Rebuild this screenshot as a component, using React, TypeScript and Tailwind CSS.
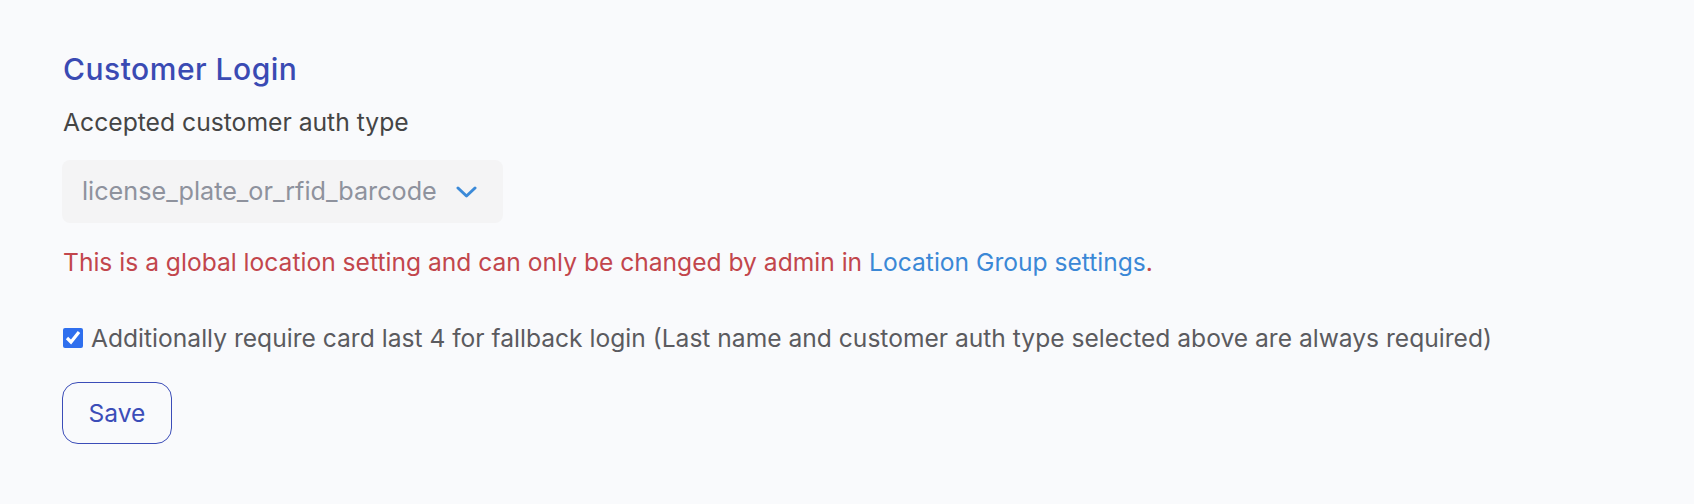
import { useState } from 'react';

export default function App() {
  const [cardLast4, setCardLast4] = useState(true);

  return (
    <div className="min-h-[504px] w-full bg-[#f9fafc] px-[63px] pt-[51px] font-['Inter',sans-serif]">
      <h2 className="text-[30px] font-medium leading-[36px] tracking-[0.5px] text-[#3a4ab3]">Customer Login</h2>

      <label className="mt-[20px] block text-[24.7px] leading-[30px] text-[#454545]">
        Accepted customer auth type
      </label>

      <div className="-ml-px mt-[23px] flex h-[63px] w-[441px] items-center rounded-[8px] bg-[#f4f4f5] pl-[20px] pr-[26px]">
        <span className="text-[25.2px] text-[#8e929d]">license_plate_or_rfid_barcode</span>
        <svg className="ml-auto" width="21" height="12" viewBox="0 0 21 12" fill="none">
          <path d="M2 2l8.5 8 8.5-8" stroke="#3b8ad8" strokeWidth="3" strokeLinecap="round" strokeLinejoin="round" />
        </svg>
      </div>

      <p className="mt-[24px] text-[24.6px] leading-[30px] text-[#c2464c]">
        This is a global location setting and can only be changed by admin in{' '}
        <a href="#" className="text-[#3b88d6]">Location Group settings</a>.
      </p>

      <label className="mt-[46px] flex items-center gap-[8px] text-[24.6px] leading-[30px] text-[#5b5b5f]">
        <input
          type="checkbox"
          checked={cardLast4}
          onChange={(e) => setCardLast4(e.target.checked)}
          className="h-[20px] w-[20px] accent-[#2f6fee]"
        />
        Additionally require card last 4 for fallback login (Last name and customer auth type selected above are always required)
      </label>

      <button className="-ml-px mt-[29px] h-[62px] w-[110px] rounded-[16px] border border-[#3b4db8] text-[24.6px] text-[#3b4db8]">
        Save
      </button>
    </div>
  );
}
